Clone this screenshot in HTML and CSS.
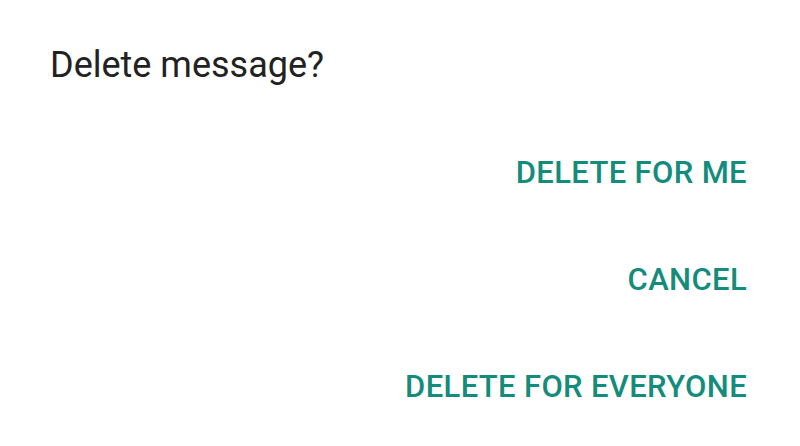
FILE: index.html
```html
<!DOCTYPE html>
<html lang="en">
  <head>
    <meta charset="UTF-8" />
    <title>Delete message?</title>
    <link rel="stylesheet" href="styles.css">
  </head>
  <body>
    <div class="dialog">
      <h2 class="dialog-title">Delete message?</h2>
      <div class="dialog-actions">
        <button class="action">DELETE FOR ME</button>
        <button class="action">CANCEL</button>
        <button class="action">DELETE FOR EVERYONE</button>
      </div>
    </div>
  </body>
</html>
```

FILE: styles.css
```css
/* Global */
body {
  margin: 0;
  background: #ffffff;
  font-family: Roboto, "Noto Sans", sans-serif;
}
.dialog {
  width: 800px;
  height: 446px;
  box-sizing: border-box;
  padding: 43px 53px 0 50px;
}
.dialog-title {
  margin: 0;
  font-size: 36px;
  font-weight: 400;
  line-height: 44px;
  color: #222222;
}
/* Action buttons, stacked */
.dialog-actions {
  display: flex;
  flex-direction: column;
  align-items: flex-end;
  margin-top: 56px;
  gap: 47px;
}
.action {
  padding: 0;
  border: none;
  background: none;
  font-family: inherit;
  font-size: 31px;
  font-weight: 500;
  line-height: 60px;
  letter-spacing: 0.35px;
  color: #148c7c;
}
```
